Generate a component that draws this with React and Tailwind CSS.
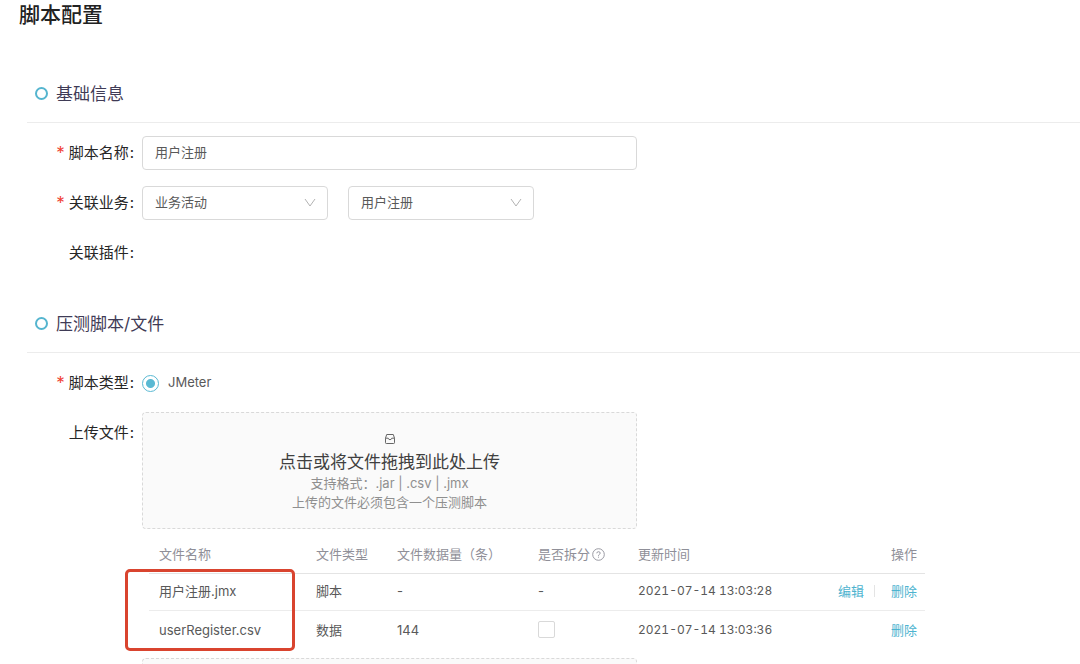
import React from "react";

function Section({ title, children }) {
  return (
    <section>
      <div className="flex h-[59px] items-center gap-2 border-b border-[#ececec] pl-2">
        <span className="size-[13px] shrink-0 rounded-full border-[2px] border-[#55b5cf]" />
        <h2 className="pt-[2px] text-[17px] leading-6 text-[#3f3b56]">{title}</h2>
      </div>
      <div className="flex flex-col pt-[13px]">{children}</div>
    </section>
  );
}

function RowLabel({ as: Tag = "label", required, children, ...rest }) {
  return (
    <Tag
      className="flex h-[34px] w-[115px] shrink-0 items-center justify-end pr-2 text-[15px] text-[#262626]"
      {...rest}
    >
      {required && <span className="mr-1 text-[17px] leading-5 text-[#f04134]">*</span>}
      {children}
      <span className="ml-px">:</span>
    </Tag>
  );
}

function SelectBox({ options, ...rest }) {
  return (
    <div className="relative w-[186px]">
      <select
        className="block h-[34px] w-full appearance-none rounded-[4px] border border-[#d9d9d9] bg-white px-3 text-[13px] text-[#595959] outline-none"
        {...rest}
      >
        {options.map((o) => (
          <option key={o}>{o}</option>
        ))}
      </select>
      <svg
        className="pointer-events-none absolute top-[11px] right-3 size-3"
        viewBox="0 0 12 12"
        fill="none"
        stroke="#b3b3b3"
        aria-hidden="true"
      >
        <path d="M1 2 L6 9 L11 2" />
      </svg>
    </div>
  );
}

function InboxIcon() {
  return (
    <svg className="size-3" viewBox="0 0 12 12" fill="none" stroke="#666" strokeLinejoin="round" aria-hidden="true">
      <path d="M1.5 5.2 L2.7 1.5 H9.3 L10.5 5.2 V9.7 Q10.5 10.5 9.7 10.5 H2.3 Q1.5 10.5 1.5 9.7 Z" />
      <path d="M1.5 5.2 H4.2 Q4.6 6.7 6 6.7 Q7.4 6.7 7.8 5.2 H10.5" />
    </svg>
  );
}

function HelpIcon() {
  return (
    <svg className="size-[13px]" viewBox="0 0 13 13" fill="none" stroke="#8f8f98" aria-hidden="true">
      <circle cx="6.5" cy="6.5" r="5.8" strokeWidth="0.9" />
      <path d="M4.8 5.3 Q4.8 3.7 6.5 3.7 Q8.2 3.7 8.2 5.1 Q8.2 6.1 7.2 6.5 Q6.5 6.8 6.5 7.8" strokeWidth="0.9" />
      <path d="M6.5 8.7 V9.6" strokeWidth="1" />
    </svg>
  );
}

const files = [
  { name: "用户注册.jmx", type: "脚本", count: "-", script: true, time: "2021-07-14 13:03:28" },
  { name: "userRegister.csv", type: "数据", count: "144", script: false, time: "2021-07-14 13:03:36" },
];

const cell = "p-0 pb-[2px] pl-[10px] text-left font-normal";
const lastCell = "p-0 pr-2 pb-[2px] text-right font-normal";

function FileTable() {
  return (
    <div className="relative ml-[7px] w-[776px]">
      <table className="w-full table-fixed border-separate border-spacing-0 text-[13px] leading-5 text-[#595959]">
        <colgroup>
          <col className="w-[157px]" />
          <col className="w-[81px]" />
          <col className="w-[141px]" />
          <col className="w-[100px]" />
          <col className="w-[170px]" />
          <col />
        </colgroup>
        <thead>
          <tr className="h-[37px] text-[#8f8f98] [&>th]:border-b [&>th]:border-[#e4e4e4]">
            <th className={cell}>文件名称</th>
            <th className={cell}>文件类型</th>
            <th className={cell}>文件数据量（条）</th>
            <th className={cell}>
              <span className="flex items-center gap-[2px]">
                是否拆分
                <HelpIcon />
              </span>
            </th>
            <th className={cell}>更新时间</th>
            <th className={lastCell}>操作</th>
          </tr>
        </thead>
        <tbody>
          {files.map((f) => (
            <tr
              key={f.name}
              className="h-[39px] first:h-[37px] [&>td]:border-[#ececec] first:[&>td]:border-b"
            >
              <td className={cell}>{f.name}</td>
              <td className={cell}>{f.type}</td>
              <td className={cell}>{f.count}</td>
              <td className={cell}>
                {f.script ? (
                  "-"
                ) : (
                  <input
                    type="checkbox"
                    aria-label="是否拆分"
                    className="block size-[17px] appearance-none rounded-[2px] border border-[#d9d9d9] bg-white"
                  />
                )}
              </td>
              <td className={cell}>
                <span className="block text-[12px] leading-5 tabular-nums">{f.time}</span>
              </td>
              <td className={lastCell}>
                <div className="flex items-center justify-end text-[#4db3cf]">
                  {f.script && (
                    <>
                      <button type="button">编辑</button>
                      <span className="mr-4 ml-[10px] h-3 w-px bg-[#e4e4e4]" />
                    </>
                  )}
                  <button type="button">删除</button>
                </div>
              </td>
            </tr>
          ))}
        </tbody>
      </table>
      <div className="pointer-events-none absolute top-8 -bottom-px -left-6 w-[170px] rounded-[5px] border-[3px] border-[#d9442f]" />
    </div>
  );
}

export default function App() {
  return (
    <main className="h-screen overflow-hidden bg-white font-['Inter','Noto_Sans_CJK_SC',sans-serif]">
      <h1 className="pl-[19px] text-[21px] leading-[30px] font-medium text-[#222]">脚本配置</h1>

      <form className="mt-[34px] flex flex-col gap-6 pl-[27px]">
        <Section title="基础信息">
          <div className="flex flex-col gap-4">
            <div className="flex">
              <RowLabel required htmlFor="name">脚本名称</RowLabel>
              <input
                id="name"
                type="text"
                defaultValue="用户注册"
                className="h-[34px] w-[495px] rounded-[4px] border border-[#d9d9d9] px-3 pb-1 text-[13px] text-[#595959] outline-none"
              />
            </div>
            <div className="flex">
              <RowLabel required htmlFor="biz">关联业务</RowLabel>
              <div className="flex gap-5">
                <SelectBox id="biz" options={["业务活动"]} />
                <SelectBox aria-label="业务名称" options={["用户注册"]} />
              </div>
            </div>
            <div className="flex">
              <RowLabel as="div">关联插件</RowLabel>
            </div>
          </div>
        </Section>

        <Section title="压测脚本/文件">
          <div className="flex flex-col gap-3">
            <div className="flex">
              <RowLabel as="div" required>脚本类型</RowLabel>
              <label className="flex items-center gap-[9px] text-[13px] text-[#595959]">
                <input
                  type="radio"
                  name="type"
                  defaultChecked
                  className="size-[17px] appearance-none rounded-full border border-[#5ab9d3] bg-white checked:bg-[radial-gradient(circle,#5ab9d3_4px,transparent_5px)]"
                />
                JMeter
              </label>
            </div>
            <div className="flex">
              <div className="pt-1">
                <RowLabel htmlFor="upload">上传文件</RowLabel>
              </div>
              <div className="flex min-w-0 flex-col gap-2">
                <label className="flex h-[117px] w-[495px] cursor-pointer flex-col items-center rounded-[4px] border border-dashed border-[#d9d9d9] bg-[#fafafa] pt-5">
                  <input id="upload" type="file" multiple className="sr-only" />
                  <InboxIcon />
                  <span className="mt-[5px] text-[17px] leading-6 text-[#404040]">点击或将文件拖拽到此处上传</span>
                  <span className="text-[13px] leading-[19px] text-[#8f8f8f]">支持格式：.jar | .csv | .jmx</span>
                  <span className="text-[13px] leading-[19px] text-[#8f8f8f]">上传的文件必须包含一个压测脚本</span>
                </label>
                <FileTable />
                <div className="h-[117px] w-[495px] rounded-[4px] border border-dashed border-[#d9d9d9] bg-[#fafafa]" />
              </div>
            </div>
          </div>
        </Section>
      </form>
    </main>
  );
}
